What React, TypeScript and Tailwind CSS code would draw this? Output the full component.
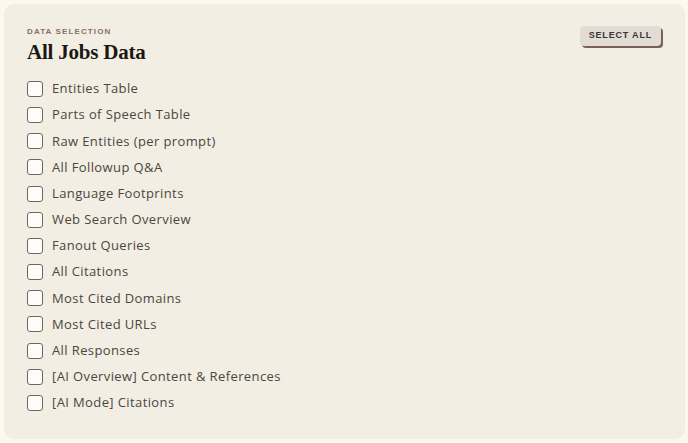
import { useState } from "react";

const items = [
  "Entities Table",
  "Parts of Speech Table",
  "Raw Entities (per prompt)",
  "All Followup Q&A",
  "Language Footprints",
  "Web Search Overview",
  "Fanout Queries",
  "All Citations",
  "Most Cited Domains",
  "Most Cited URLs",
  "All Responses",
  "[AI Overview] Content & References",
  "[AI Mode] Citations",
];

export default function App() {
  const [checked, setChecked] = useState<Record<string, boolean>>({});

  return (
    <div className="w-[688px] h-[443px] bg-[#fbf8ee] p-[4px]">
      <div className="h-[435px] w-[681px] rounded-[10px] bg-[#f2eee3] pl-[23px] pr-[24px] pt-[22px] flex flex-col">
        <div className="flex justify-between items-start">
          <div>
            <div className="text-[8px] font-bold tracking-[0.14em] text-[#8b6f64] leading-[12px] font-['Liberation_Sans',sans-serif]">
              DATA SELECTION
            </div>
            <h1 className="text-[21px] leading-[26px] font-bold text-[#1c1714] font-['Liberation_Serif',serif] tracking-[-0.01em] mt-[1px]">
              All Jobs Data
            </h1>
          </div>
          <button
            onClick={() => {
              const all: Record<string, boolean> = {};
              items.forEach((i) => (all[i] = true));
              setChecked(all);
            }}
            className="mt-[0px] h-[20px] px-[9px] rounded-[4px] bg-[#e1ddd5] shadow-[2px_2px_0_#7d5f58] text-[9px] font-bold tracking-[0.09em] text-[#3b3531] font-['Liberation_Sans',sans-serif]"
          >
            SELECT ALL
          </button>
        </div>
        <div className="mt-[16px] flex flex-col gap-[10.17px]">
          {items.map((item) => (
            <label key={item} className="flex items-center h-[16px] cursor-pointer">
              <input
                type="checkbox"
                checked={!!checked[item]}
                onChange={() => setChecked({ ...checked, [item]: !checked[item] })}
                className="appearance-none w-[16px] h-[16px] rounded-[3px] border border-[#6e6862] bg-[#fdfcf8] checked:bg-[#7d5f58]"
              />
              <span className="ml-[9px] text-[13px] text-[#4b4641] font-['Open_Sans',sans-serif] tracking-[0.03em]">
                {item}
              </span>
            </label>
          ))}
        </div>
      </div>
    </div>
  );
}
